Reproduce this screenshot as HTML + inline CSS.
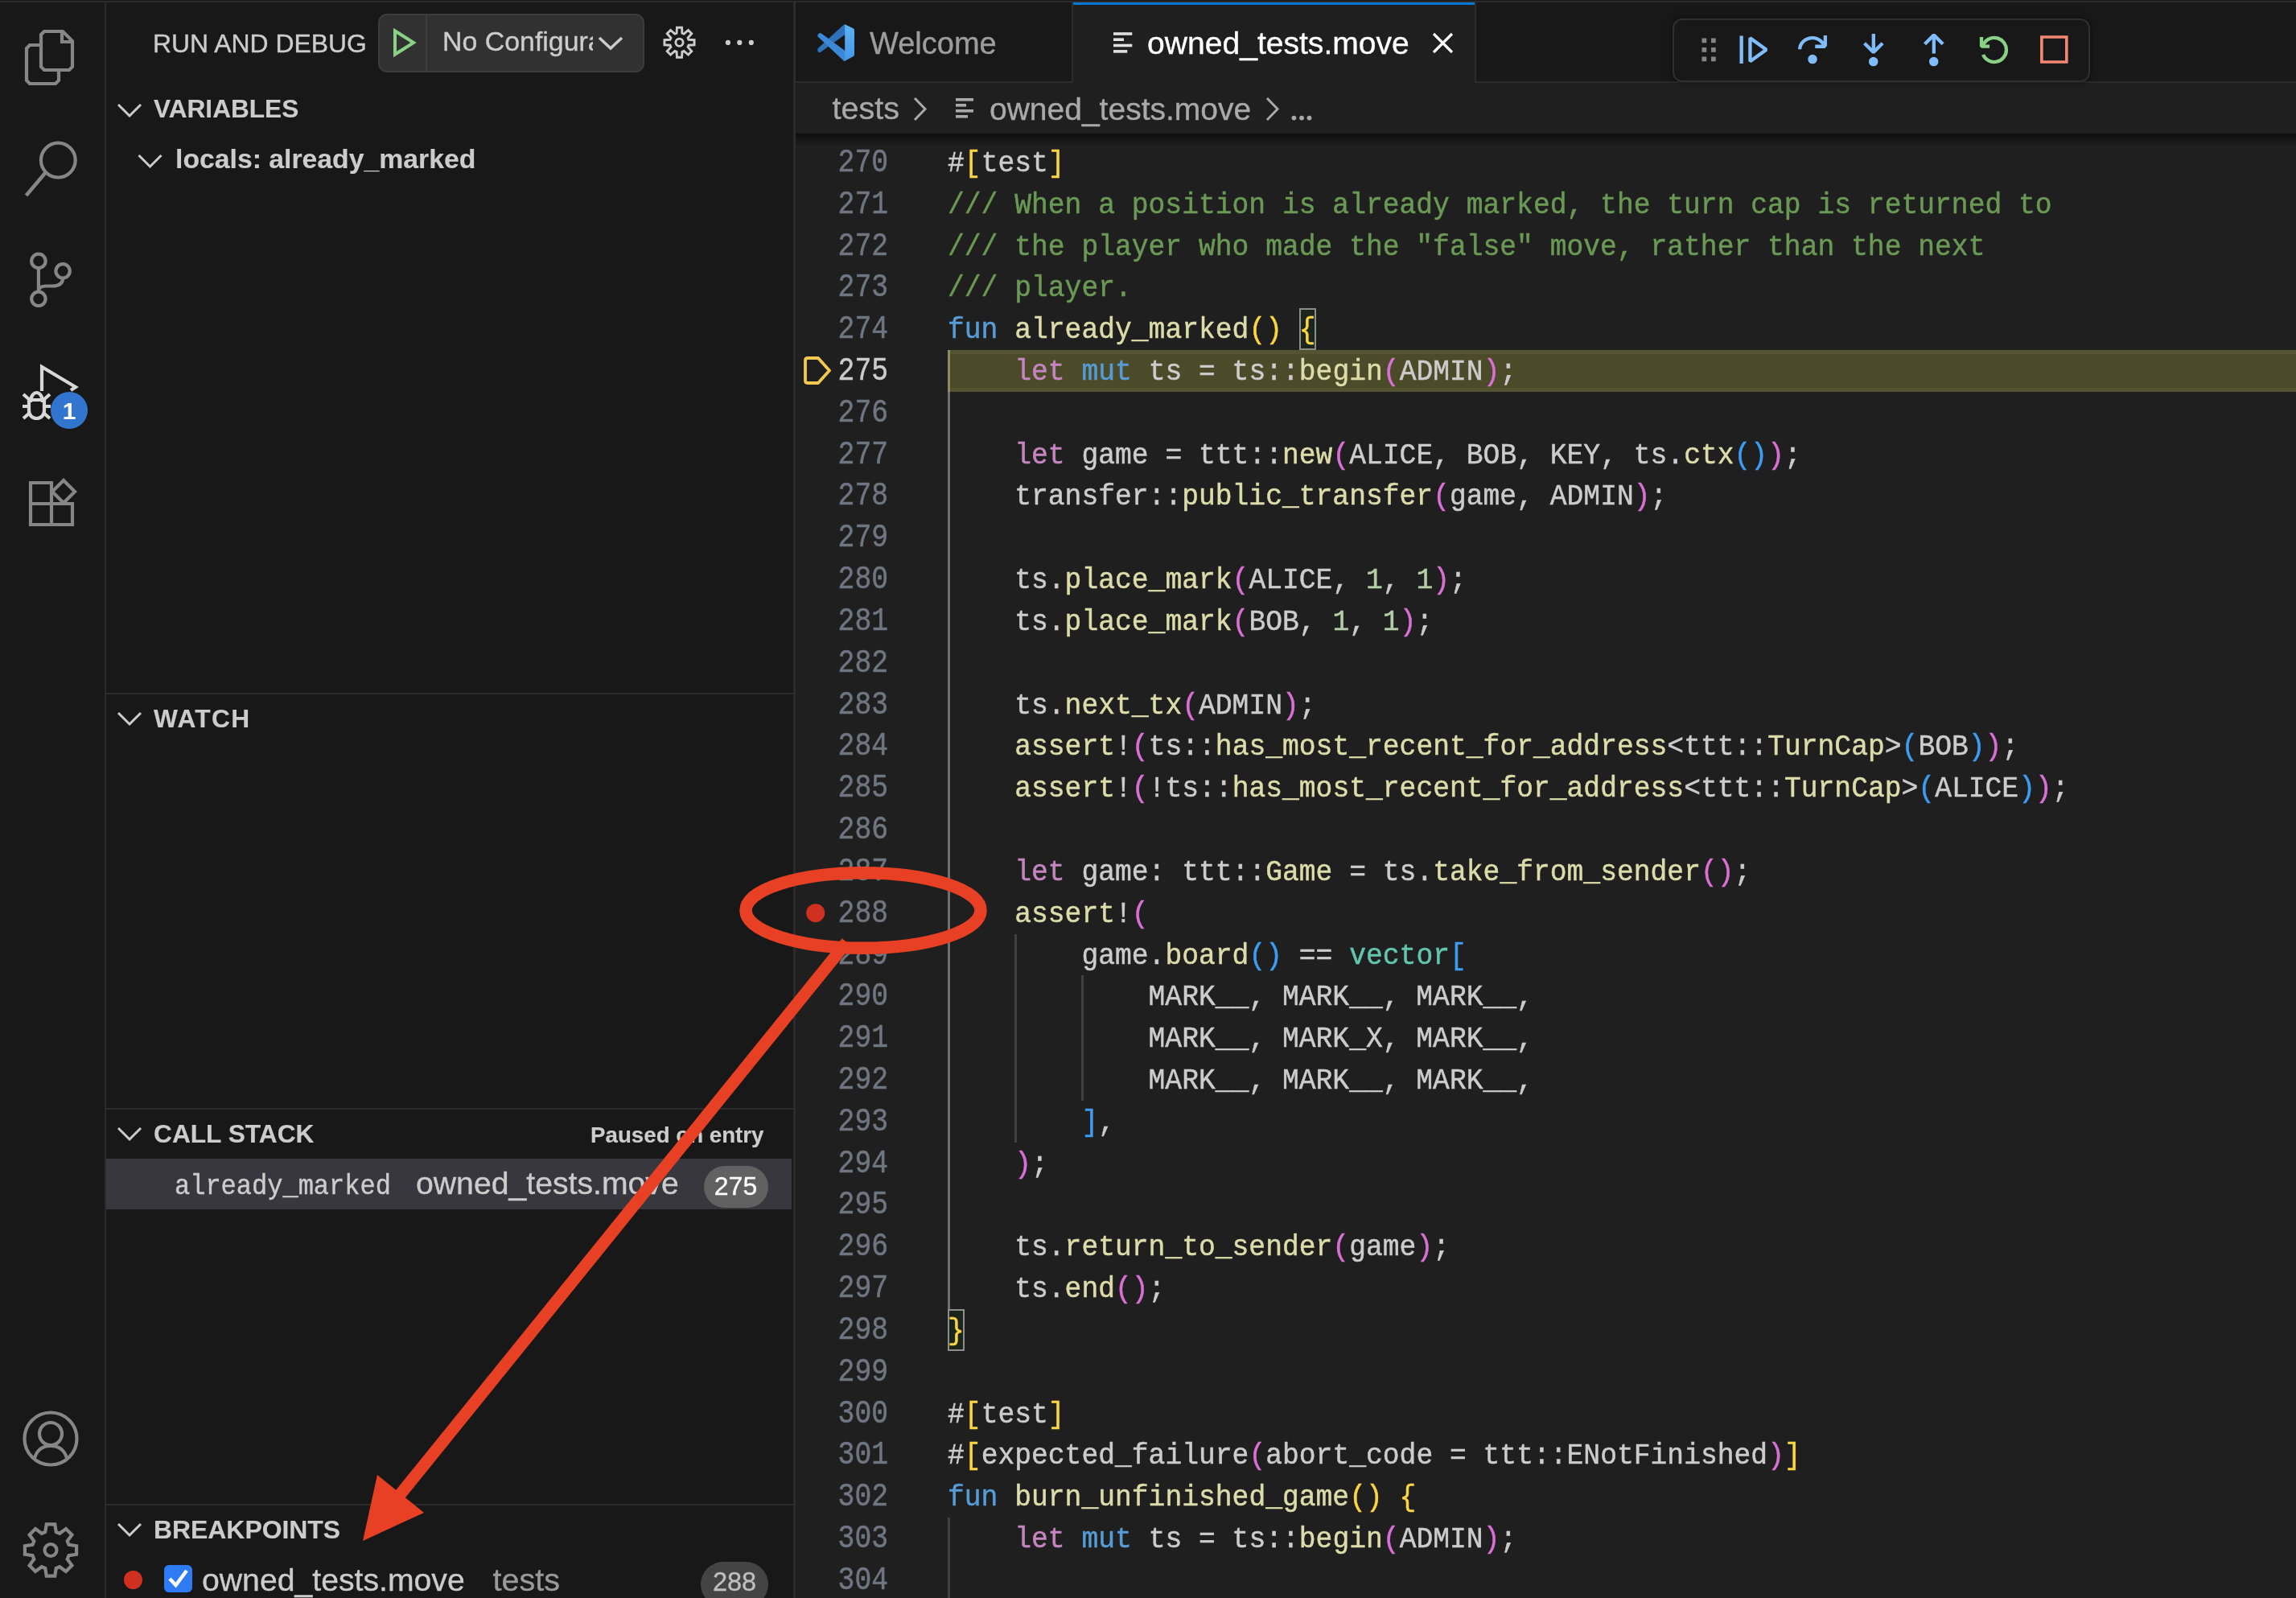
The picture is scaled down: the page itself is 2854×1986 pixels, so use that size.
<!DOCTYPE html>
<html><head><meta charset="utf-8"><style>
html,body{margin:0;padding:0;}
body{width:2854px;height:1986px;position:relative;overflow:hidden;background:#181818;}
#root{position:absolute;left:0;top:0;width:2854px;height:1986px;will-change:transform;}
svg{overflow:visible}
</style></head><body>
<div id="root"><div style="position:absolute;left:0px;top:0px;width:2854px;height:1986px;background:#181818;"></div>
<div style="position:absolute;left:989px;top:166px;width:1865px;height:1820px;background:#1f1f1f;"></div>
<div style="position:absolute;left:0px;top:1px;width:2854px;height:2px;background:#2b2b2b;"></div>
<div style="position:absolute;left:130px;top:3px;width:2px;height:1983px;background:#2b2b2b;"></div>
<div style="position:absolute;left:986px;top:3px;width:3px;height:1983px;background:#2b2b2b;"></div>
<div style="position:absolute;left:989px;top:3px;width:1865px;height:98px;background:#181818;"></div>
<div style="position:absolute;left:989px;top:101px;width:1865px;height:2px;background:#2b2b2b;"></div>
<div style="position:absolute;left:1332px;top:3px;width:503px;height:100px;background:#1f1f1f;"></div>
<div style="position:absolute;left:1332px;top:3px;width:2px;height:100px;background:#2b2b2b;"></div>
<div style="position:absolute;left:1833px;top:3px;width:2px;height:100px;background:#2b2b2b;"></div>
<div style="position:absolute;left:1334px;top:3px;width:499px;height:3px;background:#0078d4;"></div>
<div style="position:absolute;left:989px;top:103px;width:1865px;height:63px;background:#1f1f1f;"></div>
<div style="position:absolute;left:989px;top:166px;width:1865px;height:16px;background:linear-gradient(rgba(0,0,0,0.55),rgba(0,0,0,0))"></div>
<div style="position:absolute;left:1178.0px;top:434.8px;width:1676.0px;height:52.3px;background:#4b4b2a;border-top:5px solid #535332;border-bottom:5px solid #535332;box-sizing:border-box"></div>
<div style="position:absolute;left:1178.00px;top:486.92px;width:3px;height:1140.04px;background:#707070"></div>
<div style="position:absolute;left:1178.0px;top:434.8px;width:3px;height:52.3px;background:#8c8c62"></div>
<div style="position:absolute;left:1261.20px;top:1160.58px;width:3px;height:259.10px;background:#404040"></div>
<div style="position:absolute;left:1344.40px;top:1212.40px;width:3px;height:155.46px;background:#404040"></div>
<div style="position:absolute;left:1178.00px;top:1886.06px;width:3px;height:155.46px;background:#404040"></div>
<div style="position:absolute;left:1614.80px;top:383.28px;width:16.80px;height:47.82px;border:2px solid #8d8d8d;background:rgba(0,100,0,0.1);box-sizing:content-box"></div>
<div style="position:absolute;left:1178.00px;top:1626.96px;width:16.80px;height:47.82px;border:2px solid #8d8d8d;background:rgba(0,100,0,0.1);box-sizing:content-box"></div>
<div style="position:absolute;right:1750.00px;top:186.93px;font:400 34.66px/34.66px 'Liberation Mono', monospace;color:#6e7681;white-space:pre;transform:scaleY(1.15);transform-origin:0 26.57px;-webkit-text-stroke:0.45px currentColor">270</div>
<div style="position:absolute;left:1178.00px;top:186.93px;font:400 34.66px/34.66px 'Liberation Mono', monospace;color:#cccccc;white-space:pre;transform:scaleY(1.07);transform-origin:0 26.57px;-webkit-text-stroke:0.45px currentColor"><span style="color:#cccccc">#</span><span style="color:#fad642">[</span><span style="color:#cccccc">test</span><span style="color:#fad642">]</span></div>
<div style="position:absolute;right:1750.00px;top:238.75px;font:400 34.66px/34.66px 'Liberation Mono', monospace;color:#6e7681;white-space:pre;transform:scaleY(1.15);transform-origin:0 26.57px;-webkit-text-stroke:0.45px currentColor">271</div>
<div style="position:absolute;left:1178.00px;top:238.75px;font:400 34.66px/34.66px 'Liberation Mono', monospace;color:#cccccc;white-space:pre;transform:scaleY(1.07);transform-origin:0 26.57px;-webkit-text-stroke:0.45px currentColor"><span style="color:#6a9955">/// When a position is already marked, the turn cap is returned to</span></div>
<div style="position:absolute;right:1750.00px;top:290.57px;font:400 34.66px/34.66px 'Liberation Mono', monospace;color:#6e7681;white-space:pre;transform:scaleY(1.15);transform-origin:0 26.57px;-webkit-text-stroke:0.45px currentColor">272</div>
<div style="position:absolute;left:1178.00px;top:290.57px;font:400 34.66px/34.66px 'Liberation Mono', monospace;color:#cccccc;white-space:pre;transform:scaleY(1.07);transform-origin:0 26.57px;-webkit-text-stroke:0.45px currentColor"><span style="color:#6a9955">/// the player who made the &quot;false&quot; move, rather than the next</span></div>
<div style="position:absolute;right:1750.00px;top:342.39px;font:400 34.66px/34.66px 'Liberation Mono', monospace;color:#6e7681;white-space:pre;transform:scaleY(1.15);transform-origin:0 26.57px;-webkit-text-stroke:0.45px currentColor">273</div>
<div style="position:absolute;left:1178.00px;top:342.39px;font:400 34.66px/34.66px 'Liberation Mono', monospace;color:#cccccc;white-space:pre;transform:scaleY(1.07);transform-origin:0 26.57px;-webkit-text-stroke:0.45px currentColor"><span style="color:#6a9955">/// player.</span></div>
<div style="position:absolute;right:1750.00px;top:394.21px;font:400 34.66px/34.66px 'Liberation Mono', monospace;color:#6e7681;white-space:pre;transform:scaleY(1.15);transform-origin:0 26.57px;-webkit-text-stroke:0.45px currentColor">274</div>
<div style="position:absolute;left:1178.00px;top:394.21px;font:400 34.66px/34.66px 'Liberation Mono', monospace;color:#cccccc;white-space:pre;transform:scaleY(1.07);transform-origin:0 26.57px;-webkit-text-stroke:0.45px currentColor"><span style="color:#569cd6">fun</span><span style="color:#cccccc"> </span><span style="color:#dcdcaa">already_marked</span><span style="color:#fad642">()</span><span style="color:#cccccc"> </span><span style="color:#fad642">{</span></div>
<div style="position:absolute;right:1750.00px;top:446.03px;font:400 34.66px/34.66px 'Liberation Mono', monospace;color:#cccccc;white-space:pre;transform:scaleY(1.15);transform-origin:0 26.57px;-webkit-text-stroke:0.45px currentColor">275</div>
<div style="position:absolute;left:1178.00px;top:446.03px;font:400 34.66px/34.66px 'Liberation Mono', monospace;color:#cccccc;white-space:pre;transform:scaleY(1.07);transform-origin:0 26.57px;-webkit-text-stroke:0.45px currentColor"><span style="color:#cccccc">    </span><span style="color:#c586c0">let</span><span style="color:#cccccc"> </span><span style="color:#569cd6">mut</span><span style="color:#cccccc"> ts = ts::</span><span style="color:#dcdcaa">begin</span><span style="color:#da70d6">(</span><span style="color:#cccccc">ADMIN</span><span style="color:#da70d6">)</span><span style="color:#cccccc">;</span></div>
<div style="position:absolute;right:1750.00px;top:497.85px;font:400 34.66px/34.66px 'Liberation Mono', monospace;color:#6e7681;white-space:pre;transform:scaleY(1.15);transform-origin:0 26.57px;-webkit-text-stroke:0.45px currentColor">276</div>
<div style="position:absolute;right:1750.00px;top:549.67px;font:400 34.66px/34.66px 'Liberation Mono', monospace;color:#6e7681;white-space:pre;transform:scaleY(1.15);transform-origin:0 26.57px;-webkit-text-stroke:0.45px currentColor">277</div>
<div style="position:absolute;left:1178.00px;top:549.67px;font:400 34.66px/34.66px 'Liberation Mono', monospace;color:#cccccc;white-space:pre;transform:scaleY(1.07);transform-origin:0 26.57px;-webkit-text-stroke:0.45px currentColor"><span style="color:#cccccc">    </span><span style="color:#c586c0">let</span><span style="color:#cccccc"> game = ttt::</span><span style="color:#dcdcaa">new</span><span style="color:#da70d6">(</span><span style="color:#cccccc">ALICE, BOB, KEY, ts.</span><span style="color:#dcdcaa">ctx</span><span style="color:#3d9df2">()</span><span style="color:#da70d6">)</span><span style="color:#cccccc">;</span></div>
<div style="position:absolute;right:1750.00px;top:601.49px;font:400 34.66px/34.66px 'Liberation Mono', monospace;color:#6e7681;white-space:pre;transform:scaleY(1.15);transform-origin:0 26.57px;-webkit-text-stroke:0.45px currentColor">278</div>
<div style="position:absolute;left:1178.00px;top:601.49px;font:400 34.66px/34.66px 'Liberation Mono', monospace;color:#cccccc;white-space:pre;transform:scaleY(1.07);transform-origin:0 26.57px;-webkit-text-stroke:0.45px currentColor"><span style="color:#cccccc">    transfer::</span><span style="color:#dcdcaa">public_transfer</span><span style="color:#da70d6">(</span><span style="color:#cccccc">game, ADMIN</span><span style="color:#da70d6">)</span><span style="color:#cccccc">;</span></div>
<div style="position:absolute;right:1750.00px;top:653.31px;font:400 34.66px/34.66px 'Liberation Mono', monospace;color:#6e7681;white-space:pre;transform:scaleY(1.15);transform-origin:0 26.57px;-webkit-text-stroke:0.45px currentColor">279</div>
<div style="position:absolute;right:1750.00px;top:705.13px;font:400 34.66px/34.66px 'Liberation Mono', monospace;color:#6e7681;white-space:pre;transform:scaleY(1.15);transform-origin:0 26.57px;-webkit-text-stroke:0.45px currentColor">280</div>
<div style="position:absolute;left:1178.00px;top:705.13px;font:400 34.66px/34.66px 'Liberation Mono', monospace;color:#cccccc;white-space:pre;transform:scaleY(1.07);transform-origin:0 26.57px;-webkit-text-stroke:0.45px currentColor"><span style="color:#cccccc">    ts.</span><span style="color:#dcdcaa">place_mark</span><span style="color:#da70d6">(</span><span style="color:#cccccc">ALICE, </span><span style="color:#b5cea8">1</span><span style="color:#cccccc">, </span><span style="color:#b5cea8">1</span><span style="color:#da70d6">)</span><span style="color:#cccccc">;</span></div>
<div style="position:absolute;right:1750.00px;top:756.95px;font:400 34.66px/34.66px 'Liberation Mono', monospace;color:#6e7681;white-space:pre;transform:scaleY(1.15);transform-origin:0 26.57px;-webkit-text-stroke:0.45px currentColor">281</div>
<div style="position:absolute;left:1178.00px;top:756.95px;font:400 34.66px/34.66px 'Liberation Mono', monospace;color:#cccccc;white-space:pre;transform:scaleY(1.07);transform-origin:0 26.57px;-webkit-text-stroke:0.45px currentColor"><span style="color:#cccccc">    ts.</span><span style="color:#dcdcaa">place_mark</span><span style="color:#da70d6">(</span><span style="color:#cccccc">BOB, </span><span style="color:#b5cea8">1</span><span style="color:#cccccc">, </span><span style="color:#b5cea8">1</span><span style="color:#da70d6">)</span><span style="color:#cccccc">;</span></div>
<div style="position:absolute;right:1750.00px;top:808.77px;font:400 34.66px/34.66px 'Liberation Mono', monospace;color:#6e7681;white-space:pre;transform:scaleY(1.15);transform-origin:0 26.57px;-webkit-text-stroke:0.45px currentColor">282</div>
<div style="position:absolute;right:1750.00px;top:860.59px;font:400 34.66px/34.66px 'Liberation Mono', monospace;color:#6e7681;white-space:pre;transform:scaleY(1.15);transform-origin:0 26.57px;-webkit-text-stroke:0.45px currentColor">283</div>
<div style="position:absolute;left:1178.00px;top:860.59px;font:400 34.66px/34.66px 'Liberation Mono', monospace;color:#cccccc;white-space:pre;transform:scaleY(1.07);transform-origin:0 26.57px;-webkit-text-stroke:0.45px currentColor"><span style="color:#cccccc">    ts.</span><span style="color:#dcdcaa">next_tx</span><span style="color:#da70d6">(</span><span style="color:#cccccc">ADMIN</span><span style="color:#da70d6">)</span><span style="color:#cccccc">;</span></div>
<div style="position:absolute;right:1750.00px;top:912.41px;font:400 34.66px/34.66px 'Liberation Mono', monospace;color:#6e7681;white-space:pre;transform:scaleY(1.15);transform-origin:0 26.57px;-webkit-text-stroke:0.45px currentColor">284</div>
<div style="position:absolute;left:1178.00px;top:912.41px;font:400 34.66px/34.66px 'Liberation Mono', monospace;color:#cccccc;white-space:pre;transform:scaleY(1.07);transform-origin:0 26.57px;-webkit-text-stroke:0.45px currentColor"><span style="color:#cccccc">    </span><span style="color:#dcdcaa">assert</span><span style="color:#cccccc">!</span><span style="color:#da70d6">(</span><span style="color:#cccccc">ts::</span><span style="color:#dcdcaa">has_most_recent_for_address</span><span style="color:#cccccc">&lt;ttt::</span><span style="color:#dcdcaa">TurnCap</span><span style="color:#cccccc">&gt;</span><span style="color:#3d9df2">(</span><span style="color:#cccccc">BOB</span><span style="color:#3d9df2">)</span><span style="color:#da70d6">)</span><span style="color:#cccccc">;</span></div>
<div style="position:absolute;right:1750.00px;top:964.23px;font:400 34.66px/34.66px 'Liberation Mono', monospace;color:#6e7681;white-space:pre;transform:scaleY(1.15);transform-origin:0 26.57px;-webkit-text-stroke:0.45px currentColor">285</div>
<div style="position:absolute;left:1178.00px;top:964.23px;font:400 34.66px/34.66px 'Liberation Mono', monospace;color:#cccccc;white-space:pre;transform:scaleY(1.07);transform-origin:0 26.57px;-webkit-text-stroke:0.45px currentColor"><span style="color:#cccccc">    </span><span style="color:#dcdcaa">assert</span><span style="color:#cccccc">!</span><span style="color:#da70d6">(</span><span style="color:#cccccc">!ts::</span><span style="color:#dcdcaa">has_most_recent_for_address</span><span style="color:#cccccc">&lt;ttt::</span><span style="color:#dcdcaa">TurnCap</span><span style="color:#cccccc">&gt;</span><span style="color:#3d9df2">(</span><span style="color:#cccccc">ALICE</span><span style="color:#3d9df2">)</span><span style="color:#da70d6">)</span><span style="color:#cccccc">;</span></div>
<div style="position:absolute;right:1750.00px;top:1016.05px;font:400 34.66px/34.66px 'Liberation Mono', monospace;color:#6e7681;white-space:pre;transform:scaleY(1.15);transform-origin:0 26.57px;-webkit-text-stroke:0.45px currentColor">286</div>
<div style="position:absolute;right:1750.00px;top:1067.87px;font:400 34.66px/34.66px 'Liberation Mono', monospace;color:#6e7681;white-space:pre;transform:scaleY(1.15);transform-origin:0 26.57px;-webkit-text-stroke:0.45px currentColor">287</div>
<div style="position:absolute;left:1178.00px;top:1067.87px;font:400 34.66px/34.66px 'Liberation Mono', monospace;color:#cccccc;white-space:pre;transform:scaleY(1.07);transform-origin:0 26.57px;-webkit-text-stroke:0.45px currentColor"><span style="color:#cccccc">    </span><span style="color:#c586c0">let</span><span style="color:#cccccc"> game: ttt::</span><span style="color:#dcdcaa">Game</span><span style="color:#cccccc"> = ts.</span><span style="color:#dcdcaa">take_from_sender</span><span style="color:#da70d6">()</span><span style="color:#cccccc">;</span></div>
<div style="position:absolute;right:1750.00px;top:1119.69px;font:400 34.66px/34.66px 'Liberation Mono', monospace;color:#6e7681;white-space:pre;transform:scaleY(1.15);transform-origin:0 26.57px;-webkit-text-stroke:0.45px currentColor">288</div>
<div style="position:absolute;left:1178.00px;top:1119.69px;font:400 34.66px/34.66px 'Liberation Mono', monospace;color:#cccccc;white-space:pre;transform:scaleY(1.07);transform-origin:0 26.57px;-webkit-text-stroke:0.45px currentColor"><span style="color:#cccccc">    </span><span style="color:#dcdcaa">assert</span><span style="color:#cccccc">!</span><span style="color:#da70d6">(</span></div>
<div style="position:absolute;right:1750.00px;top:1171.51px;font:400 34.66px/34.66px 'Liberation Mono', monospace;color:#6e7681;white-space:pre;transform:scaleY(1.15);transform-origin:0 26.57px;-webkit-text-stroke:0.45px currentColor">289</div>
<div style="position:absolute;left:1178.00px;top:1171.51px;font:400 34.66px/34.66px 'Liberation Mono', monospace;color:#cccccc;white-space:pre;transform:scaleY(1.07);transform-origin:0 26.57px;-webkit-text-stroke:0.45px currentColor"><span style="color:#cccccc">        game.</span><span style="color:#dcdcaa">board</span><span style="color:#3d9df2">()</span><span style="color:#cccccc"> == </span><span style="color:#62c5ad">vector</span><span style="color:#3d9df2">[</span></div>
<div style="position:absolute;right:1750.00px;top:1223.33px;font:400 34.66px/34.66px 'Liberation Mono', monospace;color:#6e7681;white-space:pre;transform:scaleY(1.15);transform-origin:0 26.57px;-webkit-text-stroke:0.45px currentColor">290</div>
<div style="position:absolute;left:1178.00px;top:1223.33px;font:400 34.66px/34.66px 'Liberation Mono', monospace;color:#cccccc;white-space:pre;transform:scaleY(1.07);transform-origin:0 26.57px;-webkit-text-stroke:0.45px currentColor"><span style="color:#cccccc">            MARK__, MARK__, MARK__,</span></div>
<div style="position:absolute;right:1750.00px;top:1275.15px;font:400 34.66px/34.66px 'Liberation Mono', monospace;color:#6e7681;white-space:pre;transform:scaleY(1.15);transform-origin:0 26.57px;-webkit-text-stroke:0.45px currentColor">291</div>
<div style="position:absolute;left:1178.00px;top:1275.15px;font:400 34.66px/34.66px 'Liberation Mono', monospace;color:#cccccc;white-space:pre;transform:scaleY(1.07);transform-origin:0 26.57px;-webkit-text-stroke:0.45px currentColor"><span style="color:#cccccc">            MARK__, MARK_X, MARK__,</span></div>
<div style="position:absolute;right:1750.00px;top:1326.97px;font:400 34.66px/34.66px 'Liberation Mono', monospace;color:#6e7681;white-space:pre;transform:scaleY(1.15);transform-origin:0 26.57px;-webkit-text-stroke:0.45px currentColor">292</div>
<div style="position:absolute;left:1178.00px;top:1326.97px;font:400 34.66px/34.66px 'Liberation Mono', monospace;color:#cccccc;white-space:pre;transform:scaleY(1.07);transform-origin:0 26.57px;-webkit-text-stroke:0.45px currentColor"><span style="color:#cccccc">            MARK__, MARK__, MARK__,</span></div>
<div style="position:absolute;right:1750.00px;top:1378.79px;font:400 34.66px/34.66px 'Liberation Mono', monospace;color:#6e7681;white-space:pre;transform:scaleY(1.15);transform-origin:0 26.57px;-webkit-text-stroke:0.45px currentColor">293</div>
<div style="position:absolute;left:1178.00px;top:1378.79px;font:400 34.66px/34.66px 'Liberation Mono', monospace;color:#cccccc;white-space:pre;transform:scaleY(1.07);transform-origin:0 26.57px;-webkit-text-stroke:0.45px currentColor"><span style="color:#cccccc">        </span><span style="color:#3d9df2">]</span><span style="color:#cccccc">,</span></div>
<div style="position:absolute;right:1750.00px;top:1430.61px;font:400 34.66px/34.66px 'Liberation Mono', monospace;color:#6e7681;white-space:pre;transform:scaleY(1.15);transform-origin:0 26.57px;-webkit-text-stroke:0.45px currentColor">294</div>
<div style="position:absolute;left:1178.00px;top:1430.61px;font:400 34.66px/34.66px 'Liberation Mono', monospace;color:#cccccc;white-space:pre;transform:scaleY(1.07);transform-origin:0 26.57px;-webkit-text-stroke:0.45px currentColor"><span style="color:#cccccc">    </span><span style="color:#da70d6">)</span><span style="color:#cccccc">;</span></div>
<div style="position:absolute;right:1750.00px;top:1482.43px;font:400 34.66px/34.66px 'Liberation Mono', monospace;color:#6e7681;white-space:pre;transform:scaleY(1.15);transform-origin:0 26.57px;-webkit-text-stroke:0.45px currentColor">295</div>
<div style="position:absolute;right:1750.00px;top:1534.25px;font:400 34.66px/34.66px 'Liberation Mono', monospace;color:#6e7681;white-space:pre;transform:scaleY(1.15);transform-origin:0 26.57px;-webkit-text-stroke:0.45px currentColor">296</div>
<div style="position:absolute;left:1178.00px;top:1534.25px;font:400 34.66px/34.66px 'Liberation Mono', monospace;color:#cccccc;white-space:pre;transform:scaleY(1.07);transform-origin:0 26.57px;-webkit-text-stroke:0.45px currentColor"><span style="color:#cccccc">    ts.</span><span style="color:#dcdcaa">return_to_sender</span><span style="color:#da70d6">(</span><span style="color:#cccccc">game</span><span style="color:#da70d6">)</span><span style="color:#cccccc">;</span></div>
<div style="position:absolute;right:1750.00px;top:1586.07px;font:400 34.66px/34.66px 'Liberation Mono', monospace;color:#6e7681;white-space:pre;transform:scaleY(1.15);transform-origin:0 26.57px;-webkit-text-stroke:0.45px currentColor">297</div>
<div style="position:absolute;left:1178.00px;top:1586.07px;font:400 34.66px/34.66px 'Liberation Mono', monospace;color:#cccccc;white-space:pre;transform:scaleY(1.07);transform-origin:0 26.57px;-webkit-text-stroke:0.45px currentColor"><span style="color:#cccccc">    ts.</span><span style="color:#dcdcaa">end</span><span style="color:#da70d6">()</span><span style="color:#cccccc">;</span></div>
<div style="position:absolute;right:1750.00px;top:1637.89px;font:400 34.66px/34.66px 'Liberation Mono', monospace;color:#6e7681;white-space:pre;transform:scaleY(1.15);transform-origin:0 26.57px;-webkit-text-stroke:0.45px currentColor">298</div>
<div style="position:absolute;left:1178.00px;top:1637.89px;font:400 34.66px/34.66px 'Liberation Mono', monospace;color:#cccccc;white-space:pre;transform:scaleY(1.07);transform-origin:0 26.57px;-webkit-text-stroke:0.45px currentColor"><span style="color:#fad642">}</span></div>
<div style="position:absolute;right:1750.00px;top:1689.71px;font:400 34.66px/34.66px 'Liberation Mono', monospace;color:#6e7681;white-space:pre;transform:scaleY(1.15);transform-origin:0 26.57px;-webkit-text-stroke:0.45px currentColor">299</div>
<div style="position:absolute;right:1750.00px;top:1741.53px;font:400 34.66px/34.66px 'Liberation Mono', monospace;color:#6e7681;white-space:pre;transform:scaleY(1.15);transform-origin:0 26.57px;-webkit-text-stroke:0.45px currentColor">300</div>
<div style="position:absolute;left:1178.00px;top:1741.53px;font:400 34.66px/34.66px 'Liberation Mono', monospace;color:#cccccc;white-space:pre;transform:scaleY(1.07);transform-origin:0 26.57px;-webkit-text-stroke:0.45px currentColor"><span style="color:#cccccc">#</span><span style="color:#fad642">[</span><span style="color:#cccccc">test</span><span style="color:#fad642">]</span></div>
<div style="position:absolute;right:1750.00px;top:1793.35px;font:400 34.66px/34.66px 'Liberation Mono', monospace;color:#6e7681;white-space:pre;transform:scaleY(1.15);transform-origin:0 26.57px;-webkit-text-stroke:0.45px currentColor">301</div>
<div style="position:absolute;left:1178.00px;top:1793.35px;font:400 34.66px/34.66px 'Liberation Mono', monospace;color:#cccccc;white-space:pre;transform:scaleY(1.07);transform-origin:0 26.57px;-webkit-text-stroke:0.45px currentColor"><span style="color:#cccccc">#</span><span style="color:#fad642">[</span><span style="color:#cccccc">expected_failure</span><span style="color:#da70d6">(</span><span style="color:#cccccc">abort_code = ttt::ENotFinished</span><span style="color:#da70d6">)</span><span style="color:#fad642">]</span></div>
<div style="position:absolute;right:1750.00px;top:1845.17px;font:400 34.66px/34.66px 'Liberation Mono', monospace;color:#6e7681;white-space:pre;transform:scaleY(1.15);transform-origin:0 26.57px;-webkit-text-stroke:0.45px currentColor">302</div>
<div style="position:absolute;left:1178.00px;top:1845.17px;font:400 34.66px/34.66px 'Liberation Mono', monospace;color:#cccccc;white-space:pre;transform:scaleY(1.07);transform-origin:0 26.57px;-webkit-text-stroke:0.45px currentColor"><span style="color:#569cd6">fun</span><span style="color:#cccccc"> </span><span style="color:#dcdcaa">burn_unfinished_game</span><span style="color:#fad642">()</span><span style="color:#cccccc"> </span><span style="color:#fad642">{</span></div>
<div style="position:absolute;right:1750.00px;top:1896.99px;font:400 34.66px/34.66px 'Liberation Mono', monospace;color:#6e7681;white-space:pre;transform:scaleY(1.15);transform-origin:0 26.57px;-webkit-text-stroke:0.45px currentColor">303</div>
<div style="position:absolute;left:1178.00px;top:1896.99px;font:400 34.66px/34.66px 'Liberation Mono', monospace;color:#cccccc;white-space:pre;transform:scaleY(1.07);transform-origin:0 26.57px;-webkit-text-stroke:0.45px currentColor"><span style="color:#cccccc">    </span><span style="color:#c586c0">let</span><span style="color:#cccccc"> </span><span style="color:#569cd6">mut</span><span style="color:#cccccc"> ts = ts::</span><span style="color:#dcdcaa">begin</span><span style="color:#da70d6">(</span><span style="color:#cccccc">ADMIN</span><span style="color:#da70d6">)</span><span style="color:#cccccc">;</span></div>
<div style="position:absolute;right:1750.00px;top:1948.81px;font:400 34.66px/34.66px 'Liberation Mono', monospace;color:#6e7681;white-space:pre;transform:scaleY(1.15);transform-origin:0 26.57px;-webkit-text-stroke:0.45px currentColor">304</div>
<div style="position:absolute;left:190.00px;top:38.50px;font:400 31.9px/31.9px 'Liberation Sans', sans-serif;color:#cccccc;white-space:pre;;-webkit-text-stroke:0.35px currentColor;">RUN AND DEBUG</div>
<div style="position:absolute;left:470px;top:17px;width:327px;height:69px;background:#313131;border:2px solid #3c3c3c;border-radius:11px"></div>
<div style="position:absolute;left:529px;top:19px;width:2px;height:69px;background:#3c3c3c;"></div>
<div style="position:absolute;left:550.00px;top:35.05px;font:400 33.9px/33.9px 'Liberation Sans', sans-serif;color:#cccccc;white-space:pre;;-webkit-text-stroke:0.35px currentColor;">No Configur<span style="display:inline-block;width:6px;overflow:hidden;vertical-align:bottom">a</span></div>
<div style="position:absolute;left:191.00px;top:120.25px;font:700 31.6px/31.6px 'Liberation Sans', sans-serif;color:#cccccc;white-space:pre;;-webkit-text-stroke:0.15px currentColor;">VARIABLES</div>
<div style="position:absolute;left:218.00px;top:181.42px;font:700 33.76px/33.76px 'Liberation Sans', sans-serif;color:#cccccc;white-space:pre;;-webkit-text-stroke:0.15px currentColor;">locals: already_marked</div>
<div style="position:absolute;left:132px;top:861px;width:854px;height:2px;background:#2b2b2b;"></div>
<div style="position:absolute;left:191.00px;top:878.17px;font:700 31.7px/31.7px 'Liberation Sans', sans-serif;color:#cccccc;white-space:pre;letter-spacing:1.3px;;-webkit-text-stroke:0.15px currentColor;">WATCH</div>
<div style="position:absolute;left:132px;top:1377px;width:854px;height:2px;background:#2b2b2b;"></div>
<div style="position:absolute;left:191.00px;top:1394.17px;font:700 31.7px/31.7px 'Liberation Sans', sans-serif;color:#cccccc;white-space:pre;;-webkit-text-stroke:0.15px currentColor;">CALL STACK</div>
<div style="position:absolute;right:1904.50px;top:1396.55px;font:700 27.7px/27.7px 'Liberation Sans', sans-serif;color:#cccccc;white-space:pre;;-webkit-text-stroke:0.15px currentColor;">Paused on entry</div>
<div style="position:absolute;left:132px;top:1440px;width:852px;height:62.700000000000045px;background:#37373d;"></div>
<div style="position:absolute;left:217.00px;top:1459.97px;font:400 32px/32px 'Liberation Mono', monospace;color:#cccccc;white-space:pre;transform:scaleY(1.1);transform-origin:0 24.5px;-webkit-text-stroke:0.4px currentColor">already_marked</div>
<div style="position:absolute;left:517.00px;top:1451.32px;font:400 39.2px/39.2px 'Liberation Sans', sans-serif;color:#cccccc;white-space:pre;;-webkit-text-stroke:0.35px currentColor;">owned_tests.move</div>
<div style="position:absolute;left:875px;top:1449px;width:80px;height:52px;border-radius:26px;background:#616161"></div>
<div style="position:absolute;left:914.50px;top:1457.91px;font:400 32px/32px 'Liberation Sans', sans-serif;color:#ffffff;white-space:pre;transform:translateX(-50%);-webkit-text-stroke:0.35px currentColor;">275</div>
<div style="position:absolute;left:132px;top:1869px;width:854px;height:2px;background:#2b2b2b;"></div>
<div style="position:absolute;left:191.00px;top:1886.00px;font:700 31.9px/31.9px 'Liberation Sans', sans-serif;color:#cccccc;white-space:pre;;-webkit-text-stroke:0.15px currentColor;">BREAKPOINTS</div>
<div style="position:absolute;left:153.5px;top:1951.5px;width:23px;height:23px;border-radius:50%;background:#d0301f"></div>
<div style="position:absolute;left:204px;top:1945px;width:35px;height:34px;border-radius:6px;background:#2f7bf5"></div>
<div style="position:absolute;left:251.00px;top:1944.32px;font:400 39.2px/39.2px 'Liberation Sans', sans-serif;color:#cccccc;white-space:pre;;-webkit-text-stroke:0.35px currentColor;">owned_tests.move</div>
<div style="position:absolute;left:612.50px;top:1944.06px;font:400 39.5px/39.5px 'Liberation Sans', sans-serif;color:#9a9a9a;white-space:pre;;-webkit-text-stroke:0.35px currentColor;">tests</div>
<div style="position:absolute;left:871px;top:1941px;width:84px;height:56px;border-radius:28px;background:#444444"></div>
<div style="position:absolute;left:913.00px;top:1949.99px;font:400 32.5px/32.5px 'Liberation Sans', sans-serif;color:#bfbfbf;white-space:pre;transform:translateX(-50%);-webkit-text-stroke:0.35px currentColor;">288</div>
<div style="position:absolute;left:1081.00px;top:34.83px;font:400 38px/38px 'Liberation Sans', sans-serif;color:#9d9d9d;white-space:pre;;-webkit-text-stroke:0.35px currentColor;">Welcome</div>
<div style="position:absolute;left:1426.00px;top:33.90px;font:400 39.1px/39.1px 'Liberation Sans', sans-serif;color:#ffffff;white-space:pre;;-webkit-text-stroke:0.35px currentColor;">owned_tests.move</div>
<div style="position:absolute;left:1034.50px;top:115.31px;font:400 39.5px/39.5px 'Liberation Sans', sans-serif;color:#a9a9a9;white-space:pre;;-webkit-text-stroke:0.35px currentColor;">tests</div>
<div style="position:absolute;left:1230.00px;top:115.74px;font:400 39px/39px 'Liberation Sans', sans-serif;color:#a9a9a9;white-space:pre;;-webkit-text-stroke:0.35px currentColor;">owned_tests.move</div>
<div style="position:absolute;left:2079px;top:23px;width:515px;height:75px;background:#181818;border:2px solid #2f2f2f;border-radius:12px;box-shadow:0 0 8px rgba(0,0,0,0.5)"></div>
<svg style="position:absolute;left:0;top:0" width="2854" height="1986" viewBox="0 0 2854 1986"><path d="M51,43 L55,39 L78,39 L90,51 L90,83 L86,87 L55,87 L51,83 Z" fill="none" stroke="#868686" stroke-width="4.2" stroke-linejoin="miter"/><path d="M77,39 L77,52 L90,52" fill="none" stroke="#868686" stroke-width="4.2" /><path d="M51,56 L37,56 L33,60 L33,100 L37,104 L69,104 L73,100 L73,87" fill="none" stroke="#868686" stroke-width="4.2" /><circle cx="72.3" cy="199.1" r="21.4" fill="none" stroke="#868686" stroke-width="4.2"/><path d="M57,214 L32.5,243" fill="none" stroke="#868686" stroke-width="4.6" /><circle cx="47.9" cy="324.4" r="8.7" fill="none" stroke="#868686" stroke-width="4.2"/><circle cx="78.1" cy="336.8" r="8.7" fill="none" stroke="#868686" stroke-width="4.2"/><circle cx="47.9" cy="371.3" r="8.7" fill="none" stroke="#868686" stroke-width="4.2"/><path d="M47.9,333 L47.9,362.6" fill="none" stroke="#868686" stroke-width="4.2" /><path d="M78.1,345.5 C78.1,353 73,355.5 65,355.5 L58,355.5 C51,355.5 47.9,358 47.9,362" fill="none" stroke="#868686" stroke-width="4.2" /><path d="M52,486 L52,456 L94,481 L88,485" fill="none" stroke="#d7d7d7" stroke-width="4.2" stroke-linejoin="miter"/><path d="M38,500 C38,492 42,488 45.5,488 C49,488 53,492 53,500" fill="none" stroke="#d7d7d7" stroke-width="4.2" /><path d="M36,497 L36,510 C36,516 40,520 45.5,520 C51,520 55,516 55,510 L55,497 Z" fill="none" stroke="#d7d7d7" stroke-width="4.2" /><path d="M28,505 L36,505 M55,505 L63,505 M29,490 L37,497 M62,490 L54,497 M29,520 L37,513 M62,520 L54,513" fill="none" stroke="#d7d7d7" stroke-width="4.2" /><circle cx="86" cy="510" r="23" fill="#3275cf"/><text x="86" y="521" text-anchor="middle" font-family="Liberation Sans" font-weight="700" font-size="30" fill="#ffffff">1</text><path d="M38,600 L64,600 L64,652 L38,652 Z M38,626 L90,626 L90,652 L64,652" fill="none" stroke="#868686" stroke-width="4.2" stroke-linejoin="miter"/><path d="M79,597 L93,611 L79,625 L65,611 Z" fill="none" stroke="#868686" stroke-width="4.2" stroke-linejoin="miter"/><circle cx="63" cy="1788" r="32.5" fill="none" stroke="#868686" stroke-width="4.2"/><circle cx="63" cy="1782" r="14" fill="none" stroke="#868686" stroke-width="4.2"/><path d="M43,1812 C46,1802 53,1797 63,1797 C73,1797 80,1802 83,1812" fill="none" stroke="#868686" stroke-width="4.2" /><path d="M85.51,1919.74 L95.07,1921.26 L95.07,1931.74 L85.51,1933.26 L83.69,1937.64 L89.39,1945.47 L81.97,1952.89 L74.14,1947.19 L69.76,1949.01 L68.24,1958.57 L57.76,1958.57 L56.24,1949.01 L51.86,1947.19 L44.03,1952.89 L36.61,1945.47 L42.31,1937.64 L40.49,1933.26 L30.93,1931.74 L30.93,1921.26 L40.49,1919.74 L42.31,1915.36 L36.61,1907.53 L44.03,1900.11 L51.86,1905.81 L56.24,1903.99 L57.76,1894.43 L68.24,1894.43 L69.76,1903.99 L74.14,1905.81 L81.97,1900.11 L89.39,1907.53 L83.69,1915.36 Z" fill="none" stroke="#868686" stroke-width="4.2" stroke-linejoin="miter"/><circle cx="63" cy="1926.5" r="7.5" fill="none" stroke="#868686" stroke-width="4.2"/><path d="M491,38.5 L491,67.5 L514,53 Z" fill="none" stroke="#89d185" stroke-width="4" stroke-linejoin="miter"/><path d="M745,47 L759,60 L773,47" fill="none" stroke="#cccccc" stroke-width="3.5" /><path d="M855.99,49.30 L863.05,49.72 L863.05,55.78 L855.99,56.20 L855.07,58.44 L859.76,63.73 L855.48,68.01 L850.19,63.32 L847.95,64.24 L847.53,71.30 L841.47,71.30 L841.05,64.24 L838.81,63.32 L833.52,68.01 L829.24,63.73 L833.93,58.44 L833.01,56.20 L825.95,55.78 L825.95,49.72 L833.01,49.30 L833.93,47.06 L829.24,41.77 L833.52,37.49 L838.81,42.18 L841.05,41.26 L841.47,34.20 L847.53,34.20 L847.95,41.26 L850.19,42.18 L855.48,37.49 L859.76,41.77 L855.07,47.06 Z" fill="none" stroke="#cccccc" stroke-width="2.9" stroke-linejoin="miter"/><circle cx="844.5" cy="52.75" r="4.6" fill="none" stroke="#cccccc" stroke-width="2.9"/><circle cx="904.9" cy="52.9" r="3.1" fill="#cccccc"/><circle cx="919.3" cy="52.9" r="3.1" fill="#cccccc"/><circle cx="933.8" cy="52.9" r="3.1" fill="#cccccc"/><path d="M147,130 L161.0,144 L175,130" fill="none" stroke="#cccccc" stroke-width="3" /><path d="M172.5,193 L186.5,207 L200.5,193" fill="none" stroke="#cccccc" stroke-width="3" /><path d="M147,886 L161.0,900 L175,886" fill="none" stroke="#cccccc" stroke-width="3" /><path d="M147,1402 L161.0,1416 L175,1402" fill="none" stroke="#cccccc" stroke-width="3" /><path d="M147,1894 L161.0,1908 L175,1894" fill="none" stroke="#cccccc" stroke-width="3" /><path d="M211,1962 L218.5,1970 L232,1952" fill="none" stroke="#ffffff" stroke-width="4.5" stroke-linecap="butt"/><defs><linearGradient id="vg1" x1="0" y1="0" x2="0" y2="1"><stop offset="0" stop-color="#5db4f2"/><stop offset="1" stop-color="#4597e6"/></linearGradient></defs><path d="M1016.3,60.6 L1048.5,31 Q1050,29.8 1051,31 L1051,42.6 L1020.5,64.6 Q1018.5,66 1016.5,64 Z" fill="#2f72b9"/><path d="M1016.3,45.2 Q1016,43 1018,41.6 Q1019.5,40.5 1021,41.6 L1051,63.5 L1051,75.5 Q1050,76.5 1048.7,75.5 Z" fill="#3a88d6"/><path d="M1050.2,30.2 L1060.5,35.3 Q1062,36 1062,38 L1062,68 Q1062,69.5 1060.5,70.3 L1050.2,75.8 Z" fill="url(#vg1)"/><rect x="1384" y="40.2" width="23.299999999999955" height="3.6" fill="#e0e0e0"/><rect x="1384" y="47.400000000000006" width="13" height="3.6" fill="#e0e0e0"/><rect x="1384" y="54.7" width="23.299999999999955" height="3.6" fill="#e0e0e0"/><rect x="1384" y="62.1" width="17.299999999999955" height="3.6" fill="#e0e0e0"/><path d="M1782,42 L1805,65 M1805,42 L1782,65" fill="none" stroke="#ffffff" stroke-width="3.2" /><path d="M1137,122 L1150,135.5 L1137,149" fill="none" stroke="#a9a9a9" stroke-width="3" /><rect x="1188" y="122" width="22" height="3.6" fill="#a9a9a9"/><rect x="1188" y="129" width="13" height="3.6" fill="#a9a9a9"/><rect x="1188" y="136" width="22" height="3.6" fill="#a9a9a9"/><rect x="1188" y="143" width="15" height="3.6" fill="#a9a9a9"/><path d="M1575,122 L1588,135.5 L1575,149" fill="none" stroke="#a9a9a9" stroke-width="3" /><circle cx="1608.4" cy="146.6" r="2.9" fill="#a9a9a9"/><circle cx="1618" cy="146.6" r="2.9" fill="#a9a9a9"/><circle cx="1627.5" cy="146.6" r="2.9" fill="#a9a9a9"/><path transform="translate(2101.1,38.9) scale(2.88)" d="M5 3h2v2H5zm0 4h2v2H5zm0 4h2v2H5zM9 3h2v2H9zm0 4h2v2H9zm0 4h2v2H9z" fill="#858585"/><path transform="translate(2155.3,38.7) scale(2.88)" d="M2.5 2H4v12H2.5V2zm4.936.39L6.25 3v10l1.186.61 7-5V7.39l-7-5zM7.75 11.543V4.457L12.71 8l-4.96 3.543z" fill="#80bcfa"/><path transform="translate(2230,39) scale(2.88)" d="M14.25 5.75v-4h-1.5v2.542c-1.145-1.359-2.911-2.209-4.84-2.209-3.177 0-5.92 2.307-6.16 5.398l-.02.269h1.501l.022-.226c.212-2.195 2.202-3.94 4.656-3.94 1.736 0 3.244.875 4.05 2.166h-2.83v1.5h4.163l.962-.975V5.75h-.004zM8 14a2 2 0 1 0 0-4 2 2 0 0 0 0 4z" fill="#80bcfa"/><path transform="translate(2305.8,39.1) scale(2.88)" d="M8 9.532h.542l3.905-3.905-1.061-1.06-2.637 2.61V1H7.251v6.177l-2.637-2.61-1.061 1.06 3.905 3.905H8zm1.956 3.481a2 2 0 1 1-4 0 2 2 0 0 1 4 0z" fill="#80bcfa"/><path transform="translate(2380.8,39.1) scale(2.88)" d="M8 1h-.542L3.553 4.905l1.061 1.06 2.637-2.61v6.177h1.498V3.355l2.637 2.61 1.061-1.06L8.542 1H8zm1.956 12.013a2 2 0 1 1-4 0 2 2 0 0 1 4 0z" fill="#80bcfa"/><path transform="translate(2455.1,38.9) scale(2.88)" d="M12.75 8a4.5 4.5 0 0 1-8.61 1.834l-1.391.565A6.001 6.001 0 0 0 14.25 8 6 6 0 0 0 3.5 4.334V2.5H2v4l.75.75h3.5v-1.5H4.352A4.5 4.5 0 0 1 12.75 8z" fill="#89d185"/><path transform="translate(2530.3,38.5) scale(2.88)" d="M2 2v12h12V2H2zm10.75 10.75h-9.5v-9.5h9.5v9.5z" fill="#f48771"/><path d="M1001,448 L1001,473 Q1001,476 1004,476 L1017,476 L1031,460.5 L1017,445 L1004,445 Q1001,445 1001,448 Z" fill="none" stroke="#f2c94c" stroke-width="3.8" stroke-linejoin="round"/><circle cx="1013.7" cy="1134.7" r="11.5" fill="#d0301f"/></svg>
<svg style="position:absolute;left:0;top:0" width="2854" height="1986" viewBox="0 0 2854 1986"><ellipse cx="1073" cy="1131.5" rx="146" ry="46.8" fill="none" stroke="#e84024" stroke-width="15.5"/><path d="M1052.5,1171 L488,1869" stroke="#e84024" stroke-width="15" fill="none"/><path d="M451,1915 L469,1833 L498,1856.5 L527,1880 Z" fill="#e84024"/></svg>
</div></body></html>
